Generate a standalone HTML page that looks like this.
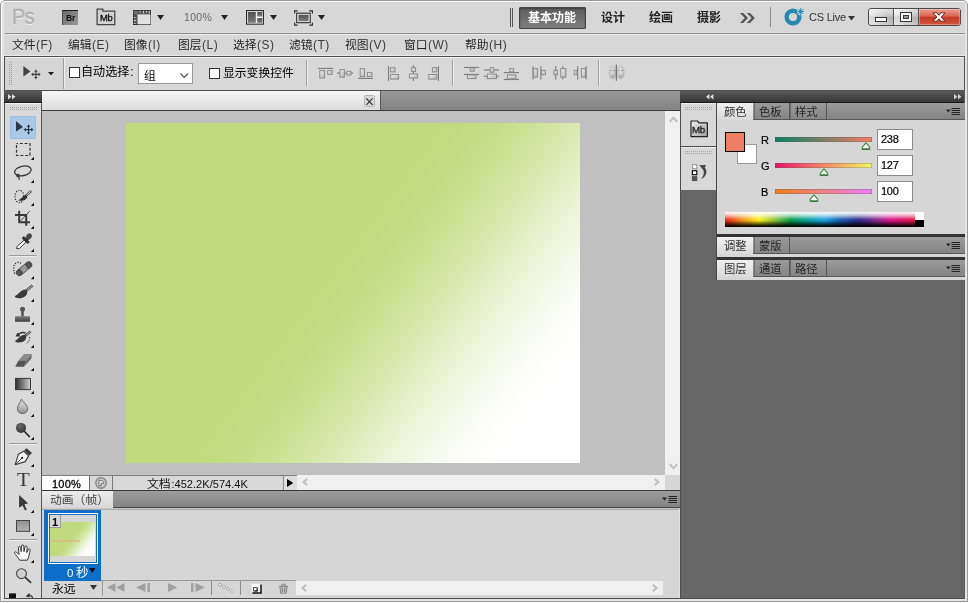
<!DOCTYPE html>
<html lang="zh"><head><meta charset="utf-8"><title>Adobe Photoshop CS5</title>
<style>
html,body{margin:0;padding:0;background:#fff}
#app{position:relative;width:969px;height:603px;overflow:hidden;font-family:"Liberation Sans",sans-serif;font-size:12px;background:#fff}
#app div,#app>svg,#app span.a{position:absolute;box-sizing:border-box}
.t{white-space:nowrap;will-change:transform}
.t span.cj{font-family:"Liberation Sans","Noto Sans CJK SC",sans-serif}
</style></head>
<body><div id="app">
<div style="left:0px;top:0px;width:968px;height:602px;border:1px solid #9a9a9a;border-radius:5px 5px 0 0;background:#e6e6e6;box-shadow:inset 1px 1px 0 #f8f8f8"></div>
<div style="left:4px;top:2px;width:961px;height:55px;background:#d7d7d7"></div>
<div style="left:5px;top:32px;width:960px;height:1px;background:#dedede"></div>
<div style="left:5px;top:33px;width:960px;height:1px;background:#8c8c8c"></div>
<div style="left:5px;top:34px;width:960px;height:1px;background:#ececec"></div>
<div class="t" style="left:12.3px;top:6.98px;line-height:20px;font-size:22px;color:#b0b0b0;text-shadow:0 1px 0 #fff;letter-spacing:-0.5px;transform:scaleX(0.9);transform-origin:0 0;-webkit-text-stroke:0.5px #b0b0b0">Ps</div>
<div style="left:62px;top:10px;width:16px;height:15px;background:linear-gradient(135deg,#6e6e6e,#989898);border-top:1px solid #1c1c1c;border-left:1px solid #4a4a4a"></div>
<div class="t" style="left:65.9px;top:8.02px;line-height:20px;font-size:8.6px;color:#111;font-weight:bold;letter-spacing:-0.2px">Br</div>
<svg style="left:96px;top:8px;" width="20" height="18" viewBox="0 0 20 18"><path d="M1.1 1.1V16.7H18.8V3.1H6.8V1.1Z" fill="#d2d2d2" stroke="#444" stroke-width="1.25" stroke-linejoin="miter"/></svg>
<div class="t" style="left:99.6px;top:7.54px;line-height:20px;font-size:9.4px;color:#111;letter-spacing:-0.3px;-webkit-text-stroke:0.35px #111">Mb</div>
<svg style="left:133px;top:10px;" width="18" height="15" viewBox="0 0 18 15"><rect x="0" y="0" width="18" height="15" fill="#262626"/><rect x="0.8" y="0.8" width="16.4" height="3.8" fill="#555"/><rect x="0.8" y="0.8" width="3.9" height="13.4" fill="#555"/><rect x="0.8" y="0.8" width="3.9" height="3.8" fill="#6c6c6c"/><rect x="4.9" y="4.8" width="12.2" height="9.2" fill="#e0e0e0" stroke="#f6f6f6" stroke-width="0.6"/><rect x="6.6" y="0.8" width="0.9" height="1.6" fill="#e8e8e8"/><rect x="9.9" y="0.8" width="0.9" height="2.6" fill="#e8e8e8"/><rect x="13.2" y="0.8" width="0.9" height="1.6" fill="#e8e8e8"/><rect x="15.9" y="0.8" width="0.9" height="2.6" fill="#e8e8e8"/><rect x="0.8" y="7.2" width="1.6" height="0.9" fill="#e8e8e8"/><rect x="0.8" y="10.2" width="2.4" height="0.9" fill="#e8e8e8"/><rect x="0.8" y="13" width="1.6" height="0.9" fill="#e8e8e8"/></svg>
<svg style="left:157px;top:15px;" width="7" height="5" viewBox="0 0 7 5"><path d="M0 0H7L3.5 5Z" fill="#222"/></svg>
<div class="t" style="left:183.6px;top:7.36px;line-height:20px;font-size:10.5px;color:#686868;letter-spacing:0.286px;">100%</div>
<svg style="left:220.5px;top:15px;" width="7" height="5" viewBox="0 0 7 5"><path d="M0 0H7L3.5 5Z" fill="#222"/></svg>
<svg style="left:246px;top:10px;" width="18" height="15" viewBox="0 0 18 15"><defs><linearGradient id="gPa" x1="0" x2="0" y1="0" y2="1"><stop offset="0" stop-color="#505050"/><stop offset="1" stop-color="#7c7c7c"/></linearGradient></defs><rect x="0.55" y="0.55" width="16.9" height="13.6" fill="#f2f2f2" stroke="#2a2a2a" stroke-width="1.1"/><rect x="1.9" y="1.9" width="7.9" height="10.9" fill="url(#gPa)"/><rect x="11.2" y="1.9" width="5.1" height="4.6" fill="url(#gPa)"/><rect x="11.2" y="8.1" width="5.1" height="4.7" fill="url(#gPa)"/></svg>
<svg style="left:270px;top:15px;" width="7" height="5" viewBox="0 0 7 5"><path d="M0 0H7L3.5 5Z" fill="#222"/></svg>
<svg style="left:293.5px;top:9.5px;" width="19" height="16" viewBox="0 0 19 16"><defs><linearGradient id="gPb" x1="0" x2="0" y1="0" y2="1"><stop offset="0" stop-color="#505050"/><stop offset="1" stop-color="#7c7c7c"/></linearGradient></defs><rect x="2.7" y="3.2" width="13.5" height="9.5" fill="#f4f4f4" stroke="#2a2a2a" stroke-width="1.1"/><rect x="4.5" y="4.7" width="10.1" height="6.6" fill="url(#gPb)"/><path d="M0.6 3.6V0.9H3.6M15.2 0.9H18.4V3.6M18.4 12.4V15.1H15.2M3.6 15.1H0.6V12.4" fill="none" stroke="#2a2a2a" stroke-width="1.1"/></svg>
<svg style="left:318px;top:15px;" width="7" height="5" viewBox="0 0 7 5"><path d="M0 0H7L3.5 5Z" fill="#222"/></svg>
<div style="left:510px;top:7.5px;width:1px;height:19px;background:#555"></div>
<div style="left:512px;top:7.5px;width:1px;height:19px;background:#555"></div>
<div style="left:519px;top:6.5px;width:66.5px;height:22px;background:linear-gradient(#5e5e5e,#7e7e7e);border:1px solid #444;border-radius:1px;box-shadow:inset 0 1px 2px rgba(0,0,0,.35)"></div>
<div class="t" style="left:527.6px;top:8.04px;line-height:20px;font-size:12px;color:#fff;"><span class="cj" style="font-size:12px;color:#fff;font-weight:bold">基本功能</span></div>
<div class="t" style="left:600.6px;top:8.04px;line-height:20px;font-size:12px;color:#000;"><span class="cj" style="font-size:12px;color:#222;font-weight:bold">设计</span></div>
<div class="t" style="left:648.6px;top:8.04px;line-height:20px;font-size:12px;color:#000;"><span class="cj" style="font-size:12px;color:#222;font-weight:bold">绘画</span></div>
<div class="t" style="left:697.1px;top:8.04px;line-height:20px;font-size:12px;color:#000;"><span class="cj" style="font-size:12px;color:#222;font-weight:bold">摄影</span></div>
<svg style="left:740px;top:13px;" width="15" height="10" viewBox="0 0 15 10"><path d="M0 0H3.2L8 5L3.2 10H0L4.8 5Z M6.8 0H10L14.8 5L10 10H6.8L11.6 5Z" fill="#555"/></svg>
<div style="left:769.5px;top:7px;width:1px;height:20px;background:#8a8a8a"></div>
<svg style="left:782.7px;top:7.4px;" width="23" height="19" viewBox="0 0 23 19"><circle cx="10" cy="10" r="6.35" fill="none" stroke="#2589b1" stroke-width="4.5"/><circle cx="17.7" cy="4.6" r="3.7" fill="#d7d7d7"/><path d="M17.7 1.2V8M14.3 4.6H21.1M15.3 2.2L20.1 7M20.1 2.2L15.3 7" stroke="#2589b1" stroke-width="1"/><circle cx="17.7" cy="4.6" r="1.3" fill="#2589b1"/></svg>
<div class="t" style="left:808.6px;top:7.19px;line-height:20px;font-size:11px;color:#333;letter-spacing:-0.217px;">CS Live</div>
<svg style="left:848px;top:16px;" width="7" height="4.5" viewBox="0 0 7 4.5"><path d="M0 0H7L3.5 4.5Z" fill="#333"/></svg>
<div style="left:868px;top:8px;width:93px;height:18px;border:1px solid #4a4a4a;border-radius:3px;background:linear-gradient(#fafafa,#d8d8d8 45%,#c4c4c4 50%,#dcdcdc)"></div>
<div style="left:869px;top:9px;width:24px;height:16px;background:linear-gradient(to right,rgba(255,255,255,.35),rgba(0,0,0,.12));border-radius:2px 0 0 2px"></div>
<div style="left:894px;top:9px;width:24px;height:16px;background:linear-gradient(to right,rgba(255,255,255,.35),rgba(0,0,0,.12))"></div>
<div style="left:893px;top:9px;width:1px;height:16px;background:#555"></div>
<div style="left:918px;top:9px;width:1px;height:16px;background:#555"></div>
<div style="left:919px;top:9px;width:41px;height:16px;border-radius:0 2px 2px 0;background:linear-gradient(#e9a090,#d9634f 45%,#c63a25 50%,#d2543f);box-shadow:inset 0 0 0 1px rgba(255,255,255,.3)"></div>
<svg style="left:875px;top:16.6px;" width="12" height="5" viewBox="0 0 12 5"><rect x="0.5" y="0.5" width="11" height="4" fill="#fff" stroke="#333"/></svg>
<svg style="left:900px;top:12px;" width="12" height="10" viewBox="0 0 12 10"><rect x="0.5" y="0.5" width="11" height="9" fill="#fff" stroke="#333"/><rect x="3.5" y="3.5" width="5" height="3" fill="#999" stroke="#333"/></svg>
<svg style="left:932px;top:12px;" width="14" height="10" viewBox="0 0 14 10"><path d="M1 0.8H5L7 3.3L9 0.8H13L9.2 5L13 9.2H9L7 6.7L5 9.2H1L4.8 5Z" fill="#fff" stroke="#5a2018" stroke-width="0.9"/></svg>
<div class="t" style="left:12.4px;top:34.64px;line-height:20px;font-size:12px;color:#262626;"><span class="cj" style="font-size:11.8px;color:#262626">文件</span><span style="letter-spacing:0.45px;margin-left:0.5px;color:#3c3c3c">(F)</span></div>
<div class="t" style="left:68.4px;top:34.64px;line-height:20px;font-size:12px;color:#262626;"><span class="cj" style="font-size:11.8px;color:#262626">编辑</span><span style="letter-spacing:0.45px;margin-left:0.5px;color:#3c3c3c">(E)</span></div>
<div class="t" style="left:124.4px;top:34.64px;line-height:20px;font-size:12px;color:#262626;"><span class="cj" style="font-size:11.8px;color:#262626">图像</span><span style="letter-spacing:0.45px;margin-left:0.5px;color:#3c3c3c">(I)</span></div>
<div class="t" style="left:177.9px;top:34.64px;line-height:20px;font-size:12px;color:#262626;"><span class="cj" style="font-size:11.8px;color:#262626">图层</span><span style="letter-spacing:0.45px;margin-left:0.5px;color:#3c3c3c">(L)</span></div>
<div class="t" style="left:233.4px;top:34.64px;line-height:20px;font-size:12px;color:#262626;"><span class="cj" style="font-size:11.8px;color:#262626">选择</span><span style="letter-spacing:0.45px;margin-left:0.5px;color:#3c3c3c">(S)</span></div>
<div class="t" style="left:289.4px;top:34.64px;line-height:20px;font-size:12px;color:#262626;"><span class="cj" style="font-size:11.8px;color:#262626">滤镜</span><span style="letter-spacing:0.45px;margin-left:0.5px;color:#3c3c3c">(T)</span></div>
<div class="t" style="left:345.4px;top:34.64px;line-height:20px;font-size:12px;color:#262626;"><span class="cj" style="font-size:11.8px;color:#262626">视图</span><span style="letter-spacing:0.45px;margin-left:0.5px;color:#3c3c3c">(V)</span></div>
<div class="t" style="left:403.9px;top:34.64px;line-height:20px;font-size:12px;color:#262626;"><span class="cj" style="font-size:11.8px;color:#262626">窗口</span><span style="letter-spacing:0.45px;margin-left:0.5px;color:#3c3c3c">(W)</span></div>
<div class="t" style="left:464.9px;top:34.64px;line-height:20px;font-size:12px;color:#262626;"><span class="cj" style="font-size:11.8px;color:#262626">帮助</span><span style="letter-spacing:0.45px;margin-left:0.5px;color:#3c3c3c">(H)</span></div>
<div style="left:4px;top:55px;width:961px;height:1px;background:#eaeaea"></div>
<div style="left:4px;top:56px;width:961px;height:35px;background:#d8d8d8;border:1px solid #505050;box-shadow:inset 0 1px 0 #f0f0f0"></div>
<div style="left:5px;top:58px;width:58px;height:32px;background:#d5d5d5"></div>
<svg style="left:9px;top:62px;" width="4" height="24" viewBox="0 0 4 24"><rect x="0" y="0" width="1" height="1" fill="#9a9a9a"/><rect x="0" y="2" width="1" height="1" fill="#9a9a9a"/><rect x="0" y="4" width="1" height="1" fill="#9a9a9a"/><rect x="0" y="6" width="1" height="1" fill="#9a9a9a"/><rect x="0" y="8" width="1" height="1" fill="#9a9a9a"/><rect x="0" y="10" width="1" height="1" fill="#9a9a9a"/><rect x="0" y="12" width="1" height="1" fill="#9a9a9a"/><rect x="0" y="14" width="1" height="1" fill="#9a9a9a"/><rect x="0" y="16" width="1" height="1" fill="#9a9a9a"/><rect x="0" y="18" width="1" height="1" fill="#9a9a9a"/><rect x="0" y="20" width="1" height="1" fill="#9a9a9a"/><rect x="0" y="22" width="1" height="1" fill="#9a9a9a"/><rect x="2" y="0" width="1" height="1" fill="#9a9a9a"/><rect x="2" y="2" width="1" height="1" fill="#9a9a9a"/><rect x="2" y="4" width="1" height="1" fill="#9a9a9a"/><rect x="2" y="6" width="1" height="1" fill="#9a9a9a"/><rect x="2" y="8" width="1" height="1" fill="#9a9a9a"/><rect x="2" y="10" width="1" height="1" fill="#9a9a9a"/><rect x="2" y="12" width="1" height="1" fill="#9a9a9a"/><rect x="2" y="14" width="1" height="1" fill="#9a9a9a"/><rect x="2" y="16" width="1" height="1" fill="#9a9a9a"/><rect x="2" y="18" width="1" height="1" fill="#9a9a9a"/><rect x="2" y="20" width="1" height="1" fill="#9a9a9a"/><rect x="2" y="22" width="1" height="1" fill="#9a9a9a"/></svg>
<svg style="left:22.5px;top:65.9px;" width="19" height="15" viewBox="0 0 19 15"><path d="M0.4 0V10.4L7.4 5.6Z" fill="#424242"/><path d="M12.9 4.6V12.2M9.1 8.4H16.7" stroke="#424242" stroke-width="1.1" fill="none"/><path d="M12.9 3.6L11.1 5.8H14.7ZM12.9 13.2L11.1 11H14.7ZM8.1 8.4L10.3 6.6V10.2ZM17.7 8.4L15.5 6.6V10.2Z" fill="#424242"/></svg>
<svg style="left:47.5px;top:71.5px;" width="6" height="3.5" viewBox="0 0 6 3.5"><path d="M0 0H6L3 3.5Z" fill="#222"/></svg>
<div style="left:63px;top:58px;width:1px;height:31px;background:#9c9c9c"></div>
<div style="left:64px;top:58px;width:1px;height:31px;background:#eee"></div>
<div style="left:69px;top:67px;width:11px;height:11px;background:#fff;border:1px solid #333"></div>
<div class="t" style="left:81.3px;top:62.24px;line-height:20px;font-size:12px;color:#000;"><span class="cj" style="font-size:12.1px;color:#000">自动选择</span><span style="margin-left:0.8px">:</span></div>
<div style="left:138px;top:63px;width:54.5px;height:21px;background:#fff;border:1px solid #9a9a9a"></div>
<div class="t" style="left:143.6px;top:65.84px;line-height:20px;font-size:12px;color:#000;"><span class="cj" style="font-size:11.8px;color:#000">组</span></div>
<svg style="left:180px;top:72.5px;" width="8.5" height="5.5" viewBox="0 0 8.5 5.5"><path d="M0.5 0.5L4.25 4.5L8 0.5" fill="none" stroke="#555" stroke-width="1.2"/></svg>
<div style="left:209px;top:68px;width:11px;height:11px;background:#fff;border:1px solid #333"></div>
<div class="t" style="left:222.5px;top:62.84px;line-height:20px;font-size:12px;color:#000;"><span class="cj" style="font-size:11.8px;color:#000">显示变换控件</span></div>
<div style="left:306px;top:60px;width:1px;height:26px;background:#a0a0a0"></div>
<div style="left:307px;top:60px;width:1px;height:26px;background:#ececec"></div>
<div style="left:451.5px;top:60px;width:1px;height:26px;background:#a0a0a0"></div>
<div style="left:452.5px;top:60px;width:1px;height:26px;background:#ececec"></div>
<div style="left:597.5px;top:60px;width:1px;height:26px;background:#a0a0a0"></div>
<div style="left:598.5px;top:60px;width:1px;height:26px;background:#ececec"></div>
<svg style="left:0;top:0" width="640" height="92" viewBox="0 0 640 92"><defs><linearGradient id="gB" x1="0" x2="1" y1="0" y2="1"><stop offset="0" stop-color="#f2f2f2"/><stop offset="1" stop-color="#b2b2b2"/></linearGradient></defs><path d="M318 68.4H333.2" stroke="#7a7a7a" stroke-width="1.1"/><rect x="319.8" y="70.6" width="4.8" height="7.4" fill="url(#gB)" stroke="#8a8a8a" stroke-width="1"/><rect x="327.7" y="70.6" width="4.4" height="3.8" fill="url(#gB)" stroke="#8a8a8a" stroke-width="1"/><path d="M337 73H353" stroke="#7a7a7a" stroke-width="1.1"/><rect x="340" y="69.6" width="4.4" height="7.6" fill="url(#gB)" stroke="#8a8a8a" stroke-width="1"/><rect x="346.8" y="71.3" width="4.1" height="3.7" fill="url(#gB)" stroke="#8a8a8a" stroke-width="1"/><path d="M358 78.4H373.2" stroke="#7a7a7a" stroke-width="1.1"/><rect x="360.2" y="68.7" width="4.4" height="7.9" fill="url(#gB)" stroke="#8a8a8a" stroke-width="1"/><rect x="367.4" y="72.6" width="4.6" height="4" fill="url(#gB)" stroke="#8a8a8a" stroke-width="1"/><path d="M388.5 66.2V81" stroke="#7a7a7a" stroke-width="1.1"/><rect x="390.6" y="67.7" width="4.4" height="4.2" fill="url(#gB)" stroke="#8a8a8a" stroke-width="1"/><rect x="390.6" y="74.5" width="8" height="4.6" fill="url(#gB)" stroke="#8a8a8a" stroke-width="1"/><path d="M413.4 65.2V81" stroke="#7a7a7a" stroke-width="1.1"/><rect x="411.4" y="67.7" width="4.2" height="3.7" fill="url(#gB)" stroke="#8a8a8a" stroke-width="1"/><rect x="409.4" y="73.9" width="8.2" height="4.1" fill="url(#gB)" stroke="#8a8a8a" stroke-width="1"/><path d="M438.4 66.2V81" stroke="#7a7a7a" stroke-width="1.1"/><rect x="432.4" y="67.7" width="4.4" height="4.2" fill="url(#gB)" stroke="#8a8a8a" stroke-width="1"/><rect x="428.8" y="74.5" width="8" height="4.6" fill="url(#gB)" stroke="#8a8a8a" stroke-width="1"/><path d="M464 67.4H479.2" stroke="#7a7a7a" stroke-width="1.1"/><path d="M464 74.4H479.2" stroke="#7a7a7a" stroke-width="1.1"/><rect x="470.2" y="68" width="4" height="3.2" fill="url(#gB)" stroke="#8a8a8a" stroke-width="1"/><rect x="467.4" y="75" width="8.7" height="3.6" fill="url(#gB)" stroke="#8a8a8a" stroke-width="1"/><path d="M483.8 70H499" stroke="#7a7a7a" stroke-width="1.1"/><path d="M483.8 76.3H499" stroke="#7a7a7a" stroke-width="1.1"/><rect x="490.2" y="67.7" width="3.6" height="4.5" fill="url(#gB)" stroke="#8a8a8a" stroke-width="1"/><rect x="487.4" y="74.1" width="9.1" height="4.5" fill="url(#gB)" stroke="#8a8a8a" stroke-width="1"/><path d="M503.7 72.6H519" stroke="#7a7a7a" stroke-width="1.1"/><path d="M503.7 79.5H519" stroke="#7a7a7a" stroke-width="1.1"/><rect x="509.7" y="68.6" width="4" height="3.4" fill="url(#gB)" stroke="#8a8a8a" stroke-width="1"/><rect x="507.4" y="75" width="8.6" height="3.9" fill="url(#gB)" stroke="#8a8a8a" stroke-width="1"/><path d="M533 66.3V79.6" stroke="#7a7a7a" stroke-width="1.1"/><path d="M540.9 66.3V79.6" stroke="#7a7a7a" stroke-width="1.1"/><rect x="533.7" y="68.6" width="3.7" height="8.6" fill="url(#gB)" stroke="#8a8a8a" stroke-width="1"/><rect x="541.6" y="70.4" width="3.8" height="4.3" fill="url(#gB)" stroke="#8a8a8a" stroke-width="1"/><path d="M555.7 66.3V79.6" stroke="#7a7a7a" stroke-width="1.1"/><path d="M562.8 66.3V79.6" stroke="#7a7a7a" stroke-width="1.1"/><rect x="553.9" y="70.4" width="3.4" height="4.3" fill="url(#gB)" stroke="#8a8a8a" stroke-width="1"/><rect x="560.8" y="68.6" width="5" height="8.6" fill="url(#gB)" stroke="#8a8a8a" stroke-width="1"/><path d="M577.7 66.3V79.6" stroke="#7a7a7a" stroke-width="1.1"/><path d="M586.1 66.3V79.6" stroke="#7a7a7a" stroke-width="1.1"/><rect x="574.2" y="70.4" width="2.9" height="4.3" fill="url(#gB)" stroke="#8a8a8a" stroke-width="1"/><rect x="581.4" y="68.6" width="4.1" height="8.6" fill="url(#gB)" stroke="#8a8a8a" stroke-width="1"/><defs><radialGradient id="gF" cx="0.45" cy="0.4" r="0.7"><stop offset="0" stop-color="#e6e6e6"/><stop offset="1" stop-color="#a8a8a8"/></radialGradient></defs><ellipse cx="612.4" cy="72.2" rx="3.7" ry="7" fill="url(#gF)"/><ellipse cx="620.6" cy="72.2" rx="4" ry="7" fill="url(#gF)"/><path d="M616.3 64.6V80.8" stroke="#5a5a5a" stroke-width="1"/><g fill="#8a8a8a"><ellipse cx="611.3" cy="70.6" rx="1" ry="0.6"/><ellipse cx="614" cy="70.6" rx="0.8" ry="0.6"/><ellipse cx="619" cy="70.6" rx="0.9" ry="0.6"/><ellipse cx="622.2" cy="70.6" rx="1" ry="0.6"/><rect x="611.6" y="75.6" width="2.2" height="0.8"/><rect x="619.4" y="75.6" width="2.4" height="0.8"/></g></svg>
<div style="left:4px;top:91px;width:38px;height:12px;background:linear-gradient(#5a5a5a,#363636);border-bottom:1px solid #1a1a1a"></div>
<svg style="left:8px;top:94px;" width="8" height="5.5" viewBox="0 0 8 5.5"><path d="M0 0L3.4 2.75L0 5.5ZM4 0L7.4 2.75L4 5.5Z" fill="#e0e0e0"/></svg>
<div style="left:4px;top:103px;width:38px;height:496px;background:#d9d9d9;border-left:1px solid #555;border-right:1px solid #555;box-shadow:inset 0 1px 0 #f4f4f4"></div>
<svg style="left:10px;top:107px;" width="28" height="4" viewBox="0 0 28 4"><rect x="0" y="0" width="1" height="1" fill="#9c9c9c"/><rect x="0" y="2" width="1" height="1" fill="#9c9c9c"/><rect x="2" y="0" width="1" height="1" fill="#9c9c9c"/><rect x="2" y="2" width="1" height="1" fill="#9c9c9c"/><rect x="4" y="0" width="1" height="1" fill="#9c9c9c"/><rect x="4" y="2" width="1" height="1" fill="#9c9c9c"/><rect x="6" y="0" width="1" height="1" fill="#9c9c9c"/><rect x="6" y="2" width="1" height="1" fill="#9c9c9c"/><rect x="8" y="0" width="1" height="1" fill="#9c9c9c"/><rect x="8" y="2" width="1" height="1" fill="#9c9c9c"/><rect x="10" y="0" width="1" height="1" fill="#9c9c9c"/><rect x="10" y="2" width="1" height="1" fill="#9c9c9c"/><rect x="12" y="0" width="1" height="1" fill="#9c9c9c"/><rect x="12" y="2" width="1" height="1" fill="#9c9c9c"/><rect x="14" y="0" width="1" height="1" fill="#9c9c9c"/><rect x="14" y="2" width="1" height="1" fill="#9c9c9c"/><rect x="16" y="0" width="1" height="1" fill="#9c9c9c"/><rect x="16" y="2" width="1" height="1" fill="#9c9c9c"/><rect x="18" y="0" width="1" height="1" fill="#9c9c9c"/><rect x="18" y="2" width="1" height="1" fill="#9c9c9c"/><rect x="20" y="0" width="1" height="1" fill="#9c9c9c"/><rect x="20" y="2" width="1" height="1" fill="#9c9c9c"/><rect x="22" y="0" width="1" height="1" fill="#9c9c9c"/><rect x="22" y="2" width="1" height="1" fill="#9c9c9c"/><rect x="24" y="0" width="1" height="1" fill="#9c9c9c"/><rect x="24" y="2" width="1" height="1" fill="#9c9c9c"/><rect x="26" y="0" width="1" height="1" fill="#9c9c9c"/><rect x="26" y="2" width="1" height="1" fill="#9c9c9c"/></svg>
<div style="left:10px;top:116px;width:26px;height:23px;background:#a9c9e6;border:1px solid #9dbfdf"></div>
<div style="left:9px;top:255px;width:28px;height:1px;background:#9c9c9c"></div>
<div style="left:9px;top:256px;width:28px;height:1px;background:#eee"></div>
<div style="left:9px;top:443px;width:28px;height:1px;background:#9c9c9c"></div>
<div style="left:9px;top:444px;width:28px;height:1px;background:#eee"></div>
<div style="left:9px;top:539px;width:28px;height:1px;background:#9c9c9c"></div>
<div style="left:9px;top:540px;width:28px;height:1px;background:#eee"></div>
<svg style="left:0;top:0" width="46" height="603" viewBox="0 0 46 603"><defs><linearGradient id="gGrad" x1="0" x2="1" y1="0" y2="0"><stop offset="0" stop-color="#2e2e2e"/><stop offset="1" stop-color="#d0d0d0"/></linearGradient><linearGradient id="gRect" x1="0" x2="0" y1="0" y2="1"><stop offset="0" stop-color="#8f8f8f"/><stop offset="1" stop-color="#b4b4b4"/></linearGradient><linearGradient id="gDrop" x1="0" x2="0" y1="0" y2="1"><stop offset="0" stop-color="#dadada"/><stop offset="0.45" stop-color="#c6c6c6"/><stop offset="1" stop-color="#8c8c8c"/></linearGradient><radialGradient id="gDodge" cx="0.4" cy="0.35" r="0.7"><stop offset="0" stop-color="#6a6a6a"/><stop offset="1" stop-color="#333"/></radialGradient><linearGradient id="gStamp" x1="0" x2="0" y1="0" y2="1"><stop offset="0" stop-color="#7a7a7a"/><stop offset="0.6" stop-color="#5a5a5a"/><stop offset="1" stop-color="#3a3a3a"/></linearGradient></defs><path d="M30.8 160 L34 156.8 V160 Z" fill="#111"/><path d="M30.8 183 L34 179.8 V183 Z" fill="#111"/><path d="M30.8 206 L34 202.8 V206 Z" fill="#111"/><path d="M30.8 229 L34 225.8 V229 Z" fill="#111"/><path d="M30.8 252 L34 248.8 V252 Z" fill="#111"/><path d="M30.8 279.2 L34 276 V279.2 Z" fill="#111"/><path d="M30.8 302 L34 298.8 V302 Z" fill="#111"/><path d="M30.8 325 L34 321.8 V325 Z" fill="#111"/><path d="M30.8 348 L34 344.8 V348 Z" fill="#111"/><path d="M30.8 371 L34 367.8 V371 Z" fill="#111"/><path d="M30.8 394 L34 390.8 V394 Z" fill="#111"/><path d="M30.8 417 L34 413.8 V417 Z" fill="#111"/><path d="M30.8 440 L34 436.8 V440 Z" fill="#111"/><path d="M30.8 467 L34 463.8 V467 Z" fill="#111"/><path d="M30.8 490 L34 486.8 V490 Z" fill="#111"/><path d="M30.8 513 L34 509.8 V513 Z" fill="#111"/><path d="M30.8 536 L34 532.8 V536 Z" fill="#111"/><path d="M30.8 563 L34 559.8 V563 Z" fill="#111"/><path d="M16 121V131.4L23 126.9Z" fill="#2c3848"/><path d="M28.5 125.6V133.6M24.6 129.6H32.6" stroke="#2c3848" stroke-width="1.1" fill="none"/><path d="M28.5 124.6L26.7 126.8H30.3ZM28.5 134.6L26.7 132.4H30.3ZM23.7 129.6L25.9 127.8V131.4ZM33.4 129.6L31.2 127.8V131.4Z" fill="#2c3848"/><rect x="16.5" y="143.5" width="13.5" height="12" fill="none" stroke="#303030" stroke-width="1.2" stroke-dasharray="3 1.8" stroke-dashoffset="1.5"/><ellipse cx="22.9" cy="170.9" rx="8.4" ry="4.7" transform="rotate(-12 22.9 170.9)" fill="none" stroke="#3a3a3a" stroke-width="1.3"/><path d="M16.2 175C17.5 173.8 19.6 174.6 19.4 176C19.2 177.2 17 177 16.8 176C19 176.4 20 178 18.8 180" fill="none" stroke="#3a3a3a" stroke-width="1.2"/><ellipse cx="19.4" cy="196.5" rx="4.4" ry="6.2" fill="none" stroke="#222" stroke-width="1.3" stroke-dasharray="1.1 1.5"/><path d="M25.8 195.8L31.3 190.8" stroke="#444" stroke-width="2.4"/><path d="M26.2 195.5L31 191.1" stroke="#eee" stroke-width="1"/><path d="M17.8 200.2C20.5 199.8 22 196.2 25.6 194.9C27.2 195.4 27.6 196.6 27.2 197.6C25.5 200.8 21 201.6 17.8 200.2Z" fill="#333"/><path d="M19.2 210.8V222.3H30M15 215H26.2V225.7" fill="none" stroke="#383838" stroke-width="2"/><path d="M20.3 221.2L29.8 211" stroke="#383838" stroke-width="0.9"/><path d="M16.6 248.6L17 246.6L24 240.2L26 242.2L19.2 248.6Z" fill="#fff" stroke="#333" stroke-width="1"/><path d="M22.8 237.2L28.8 243" stroke="#333" stroke-width="3"/><path d="M26 240L29 237" stroke="#333" stroke-width="3.4"/><ellipse cx="29" cy="236.4" rx="2.6" ry="3.1" transform="rotate(45 29 236.4)" fill="#4a4a4a"/><path d="M14.6 273.8C12.5 268 14 262.8 17.8 262.4C19.6 262.2 20.6 263 21.3 263.8" fill="none" stroke="#222" stroke-width="1.3" stroke-dasharray="1.1 1.5"/><path d="M19.4 272.6L28.7 264.9" stroke="#4c4c4c" stroke-width="7" stroke-linecap="round"/><path d="M21.5 270.9L26.6 266.7" stroke="#8e8e8e" stroke-width="5.8"/><g fill="#ddd"><circle cx="23" cy="268" r="0.5"/><circle cx="24.6" cy="269.6" r="0.5"/><circle cx="25" cy="266.6" r="0.5"/><circle cx="23.2" cy="270.8" r="0.5"/><circle cx="19" cy="272" r="0.4"/><circle cx="28.6" cy="264.6" r="0.4"/><circle cx="29.6" cy="266" r="0.4"/><circle cx="18.2" cy="274" r="0.4"/></g><g transform="translate(14.8 285) scale(1)"><path d="M11.6 5.4L17.6 0.4" stroke="#444" stroke-width="2.6"/><path d="M12 5.2L17.4 0.7" stroke="#ddd" stroke-width="0.9"/><path d="M0 11C3.4 10 5 5.2 10.2 4.4C12 4.6 12.8 6.2 12.4 8.2C11 12.8 5 14.2 0.8 12.5C0.2 12.2 0 11.6 0 11Z" fill="#3a3a3a"/></g><circle cx="22.5" cy="309.3" r="2.5" fill="#555"/><rect x="21.2" y="310.5" width="2.6" height="6" fill="#555"/><rect x="15" y="316.2" width="15" height="5.6" rx="0.6" fill="url(#gStamp)"/><g transform="translate(15.2 331) scale(0.88)"><path d="M11.6 5.4L17.6 0.4" stroke="#444" stroke-width="2.6"/><path d="M12 5.2L17.4 0.7" stroke="#ddd" stroke-width="0.9"/><path d="M0 11C3.4 10 5 5.2 10.2 4.4C12 4.6 12.8 6.2 12.4 8.2C11 12.8 5 14.2 0.8 12.5C0.2 12.2 0 11.6 0 11Z" fill="#3a3a3a"/></g><path d="M25.6 333.2C23 331.8 19.5 332.6 18 335" fill="none" stroke="#333" stroke-width="1.5"/><path d="M15.6 336.6L20.6 336.4L17.4 332.6Z" fill="#333"/><path d="M29.6 337.2C30 339.6 28.8 342 26.4 343.4" fill="none" stroke="#222" stroke-width="1.1" stroke-dasharray="1 1.4"/><path d="M18.5 360.6L24 354H31.8L26.5 360.6Z" fill="#8c8c8c"/><path d="M18.5 360.6H26.5L24 366.8H15.2Z" fill="#555"/><path d="M26.5 360.6L31.8 354L31.4 358.6L24 366.8Z" fill="#6a6a6a"/><rect x="15.5" y="378.4" width="15" height="11.2" fill="url(#gGrad)" stroke="#3a3a3a" stroke-width="1"/><path d="M21.4 399.2C20.6 402.6 17.4 405.2 17.4 408.8C17.4 411.6 19.6 413.6 22.5 413.6C25.4 413.6 27.6 411.6 27.6 408.8C27.6 405.2 23.4 402.6 21.4 399.2Z" fill="url(#gDrop)" stroke="#5a5a5a" stroke-width="0.9"/><path d="M24 431L29.8 437" stroke="#222" stroke-width="1.6"/><circle cx="21" cy="427.9" r="5" fill="url(#gDodge)"/><path d="M15.2 464.7L18.4 454.2L23.6 451.2L28.6 455.9L25.2 461.6Z" fill="#f4f4f4" stroke="#3a3a3a" stroke-width="1.1" stroke-linejoin="round"/><path d="M15.2 464.7L22 458" stroke="#3a3a3a" stroke-width="0.9"/><circle cx="22.1" cy="457.9" r="1.1" fill="#222"/><path d="M24 450.6L26.6 448.2L32 453.1L29.3 455.6Z" fill="#3a3a3a"/><text x="16.9" y="486" font-family="Liberation Serif, serif" font-size="19.4" fill="#3a3a3a" textLength="12.8" lengthAdjust="spacingAndGlyphs">T</text><path d="M19.1 495.1V507.8L22.6 505.6L25 510.4L26.8 509.5L24.4 504.6L28 503.3Z" fill="#3a3a3a"/><rect x="16.5" y="520.5" width="13" height="10.8" fill="url(#gRect)" stroke="#444" stroke-width="1"/><path d="M19.6 560.2C18 557.4 16 555 14.6 553.4C14 552.4 15.4 551.2 16.6 552.2L19 554.6L18.4 547.6C18.4 546 20.4 546 20.6 547.4L21.2 551.6L21.4 546C21.6 544.4 23.6 544.4 23.8 546L24 551.6L25 546.8C25.4 545.4 27.2 545.8 27.2 547.2L26.8 552.6L28.2 549.6C28.8 548.4 30.6 549 30.2 550.4C29.4 553.4 29 557 27.4 560.2Z" fill="#fafafa" stroke="#333" stroke-width="1" stroke-linejoin="round"/><path d="M25.2 577.4L30.6 582.4" stroke="#333" stroke-width="1.8" stroke-linecap="round"/><circle cx="21.5" cy="573.7" r="4.9" fill="#d0d0d0" stroke="#444" stroke-width="1.1"/><rect x="9" y="593.4" width="7" height="5" fill="#111"/><rect x="16.4" y="596.6" width="1.4" height="1.4" fill="#fff"/><path d="M27 596.4C27.5 594.6 31.2 594.2 32.8 598" fill="none" stroke="#333" stroke-width="1.2"/><path d="M25.6 596.2L29.6 593V597.4Z" fill="#333"/></svg>
<div style="left:42px;top:91px;width:338px;height:20px;background:linear-gradient(#f6f6f6,#dadada)"></div>
<div style="left:380px;top:91px;width:300px;height:20px;background:linear-gradient(#989898,#828282)"></div>
<div style="left:42px;top:110px;width:638px;height:1px;background:#3c3c3c"></div>
<div style="left:42px;top:111px;width:623px;height:364px;background:#c0c0c0"></div>
<div style="left:126px;top:122.5px;width:454px;height:340.5px;background:linear-gradient(127deg,#bfdb7d 0%,#bfdb7d 45.0%,#c2dd83 50.4%,#c9e191 55.8%,#d3e6a6 61.1%,#dfedbe 66.5%,#ebf4d6 71.9%,#f5f9eb 77.2%,#fcfdf9 82.6%,#ffffff 88.0%)"></div>
<div style="left:364px;top:95px;width:11px;height:12px;border:1px solid #b4b4b4;background:#dadada;border-radius:1.5px"></div>
<svg style="left:366px;top:97.5px;" width="7" height="7.4" viewBox="0 0 7 7.4"><path d="M0.3 0.4L6.6 7M6.6 0.4L0.3 7" stroke="#333" stroke-width="1.15"/></svg>
<div style="left:380px;top:91px;width:1px;height:19px;background:#5a5a5a"></div>
<div style="left:665px;top:111px;width:15px;height:364px;background:#f0f0f0"></div>
<svg style="left:668.5px;top:116.4px;" width="9" height="7" viewBox="0 0 9 7"><path d="M0.8 5.8L4.5 1.7L8.2 5.8" fill="none" stroke="#bdbdbd" stroke-width="2"/></svg>
<svg style="left:668.5px;top:463.4px;" width="9" height="7" viewBox="0 0 9 7"><path d="M0.8 1.2L4.5 5.3L8.2 1.2" fill="none" stroke="#bdbdbd" stroke-width="2"/></svg>
<div style="left:42px;top:475px;width:638px;height:15px;background:#f0f0f0"></div>
<div style="left:42px;top:475px;width:255px;height:1px;background:#808080"></div>
<div style="left:665px;top:475px;width:15px;height:15px;background:#d6d6d6"></div>
<div style="left:42px;top:476px;width:47px;height:14px;background:#fff"></div>
<div style="left:89px;top:476px;width:1px;height:14px;background:#6a6a6a"></div>
<div style="left:90px;top:476px;width:22px;height:14px;background:#d8d8d8"></div>
<div style="left:112px;top:476px;width:1px;height:14px;background:#7a7a7a"></div>
<div style="left:113px;top:476px;width:170px;height:14px;background:#d8d8d8"></div>
<div style="left:283px;top:476px;width:1px;height:14px;background:#888"></div>
<div style="left:284px;top:476px;width:13px;height:14px;background:#dedede"></div>
<div class="t" style="left:51.6px;top:474.19px;line-height:20px;font-size:11px;color:#000;letter-spacing:0.217px;-webkit-text-stroke:0.3px #000">100%</div>
<svg style="left:95px;top:476.9px;" width="12" height="12" viewBox="0 0 12 12"><circle cx="6" cy="6" r="5.2" fill="#cdcdcd" stroke="#858585" stroke-width="1.4"/><path d="M3.9 3.4H6.6C8.2 3.6 8.9 5 8.8 6.4L6.2 6.2V8.8H3.9Z" fill="#e2e2e2" stroke="#686868" stroke-width="0.9"/></svg>
<div class="t" style="left:147px;top:473.79px;line-height:20px;font-size:11px;color:#111;"><span class="cj" style="font-size:11.8px;color:#111">文档</span><span style="margin-left:0.8px;letter-spacing:0.047px;">:452.2K/574.4K</span></div>
<svg style="left:286.5px;top:479px;" width="6.5" height="8" viewBox="0 0 6.5 8"><path d="M0 0L6.5 4L0 8Z" fill="#000"/></svg>
<svg style="left:302px;top:478.3px;" width="6" height="8" viewBox="0 0 6 8"><path d="M5.2 0.9L1.5 4L5.2 7.1" fill="none" stroke="#bdbdbd" stroke-width="2"/></svg>
<svg style="left:654px;top:478.3px;" width="6" height="8" viewBox="0 0 6 8"><path d="M0.8 0.9L4.5 4L0.8 7.1" fill="none" stroke="#bdbdbd" stroke-width="2"/></svg>
<div style="left:42px;top:490px;width:638px;height:1px;background:#3a3a3a"></div>
<div style="left:42px;top:491px;width:638px;height:17px;background:linear-gradient(#9c9c9c,#848484);border-bottom:1px solid #4a4a4a"></div>
<div style="left:42px;top:491px;width:71px;height:18px;background:linear-gradient(#ececec,#d6d6d6)"></div>
<div style="left:42px;top:508px;width:638px;height:2px;background:#c9c9c9;border-bottom:1px solid #aaa"></div>
<div style="left:113px;top:508px;width:567px;height:1px;background:#c4c4c4"></div>
<div style="left:42px;top:510px;width:638px;height:88px;background:#d6d6d6"></div>
<div style="left:679px;top:509px;width:1px;height:89px;background:#e4e4e4"></div>
<div class="t" style="left:49.5px;top:490.44px;line-height:20px;font-size:12px;color:#000;"><span class="cj" style="font-size:11.8px;color:#444">动画（帧）</span></div>
<svg style="left:661.5px;top:496px;" width="15" height="8" viewBox="0 0 15 8"><path d="M0 1.5H5L2.5 4.5Z" fill="#222"/><path d="M6.5 0.5H15M6.5 2.5H15M6.5 4.5H15M6.5 6.5H15" stroke="#222" stroke-width="1"/></svg>
<div style="left:44px;top:510px;width:57px;height:71px;background:#0d6fc9"></div>
<div style="left:47.5px;top:513px;width:50px;height:51px;border:1px solid #fff;background:#0d6fc9"></div>
<div style="left:49.5px;top:515px;width:46px;height:47px;background:#d6d6d6"></div>
<div style="left:50px;top:521.5px;width:45px;height:34px;background:linear-gradient(127deg,#bfdb7d 0%,#bfdb7d 45.0%,#c2dd83 50.4%,#c9e191 55.8%,#d3e6a6 61.1%,#dfedbe 66.5%,#ebf4d6 71.9%,#f5f9eb 77.2%,#fcfdf9 82.6%,#ffffff 88.0%)"></div>
<div style="left:52px;top:540px;width:27.6px;height:2px;background:repeating-linear-gradient(to right,#e9a98a 0,#e9a98a 2px,rgba(233,169,138,.35) 2px,rgba(233,169,138,.35) 3px);opacity:.7"></div>
<div style="left:49.5px;top:515px;width:11px;height:12.5px;background:#d8d8d8;border-right:1px solid #999;border-bottom:1px solid #999"></div>
<div class="t" style="left:51.8px;top:511.79px;line-height:20px;font-size:11px;color:#000;font-weight:bold">1</div>
<div class="t" style="left:67.3px;top:563.02px;line-height:20px;font-size:11.5px;color:#fff;">0</div>
<div class="t" style="left:76.3px;top:563.02px;line-height:20px;font-size:11.5px;color:#fff;"><span class="cj" style="font-size:12.5px;color:#fff">秒</span></div>
<svg style="left:89.3px;top:568px;" width="6.5" height="5" viewBox="0 0 6.5 5"><path d="M0 0H6.5L3.25 5Z" fill="#0a0a20"/></svg>
<div style="left:101px;top:580px;width:195px;height:1px;background:#9a9a9a"></div>
<div style="left:101.5px;top:581px;width:1px;height:15px;background:#9a9a9a"></div>
<div class="t" style="left:52px;top:578.84px;line-height:20px;font-size:12px;color:#000;"><span class="cj" style="font-size:11.8px;color:#000">永远</span></div>
<svg style="left:90px;top:585px;" width="7" height="5" viewBox="0 0 7 5"><path d="M0 0H7L3.5 5Z" fill="#333"/></svg>
<svg style="left:107px;top:583px;" width="18" height="9" viewBox="0 0 18 9"><path d="M8.5 0V9L0 4.5ZM17.5 0V9L9 4.5Z" fill="#a0a0a0"/></svg>
<svg style="left:136px;top:583px;" width="15" height="9" viewBox="0 0 15 9"><path d="M9.5 0V9L0 4.5Z" fill="#a0a0a0"/><rect x="11.5" y="0" width="2.5" height="9" fill="#a0a0a0"/></svg>
<svg style="left:168px;top:583px;" width="10" height="9" viewBox="0 0 10 9"><path d="M0 0V9L9.5 4.5Z" fill="#a0a0a0"/></svg>
<svg style="left:190.5px;top:583px;" width="15" height="9" viewBox="0 0 15 9"><rect x="0" y="0" width="2.5" height="9" fill="#a0a0a0"/><path d="M4.5 0V9L14 4.5Z" fill="#a0a0a0"/></svg>
<div style="left:211px;top:581px;width:1px;height:14px;background:#8e8e8e"></div>
<div style="left:240px;top:581px;width:1px;height:14px;background:#8e8e8e"></div>
<svg style="left:218px;top:583px;" width="16" height="10" viewBox="0 0 16 10"><circle cx="2" cy="1.8" r="1.5" fill="#f4f4f4" stroke="#9c9c9c" stroke-width="0.9" opacity="1"/><circle cx="6" cy="3.9" r="1.5" fill="#f4f4f4" stroke="#9c9c9c" stroke-width="0.9" opacity="0.85"/><circle cx="10" cy="6" r="1.5" fill="#f4f4f4" stroke="#9c9c9c" stroke-width="0.9" opacity="0.7"/><circle cx="14" cy="8.1" r="1.5" fill="#f4f4f4" stroke="#9c9c9c" stroke-width="0.9" opacity="0.55"/></svg>
<svg style="left:251px;top:583px;" width="11" height="11" viewBox="0 0 11 11"><rect x="0.6" y="0.8" width="9.4" height="9" fill="#f6f6f6"/><path d="M10 1.6V9.9H1.4" fill="none" stroke="#111" stroke-width="1.5"/><rect x="2.6" y="4.6" width="3.6" height="3.4" fill="#fff" stroke="#333" stroke-width="0.9"/><path d="M6.2 5.6V8H3.6" fill="none" stroke="#111" stroke-width="1"/></svg>
<svg style="left:278px;top:582.5px;" width="11" height="11" viewBox="0 0 11 11"><path d="M2 3.6H9L8.4 10.2H2.6Z" fill="#c4c4c4" stroke="#858585" stroke-width="1"/><path d="M1 3.2H10M4 3V1.3H7V3" stroke="#858585" stroke-width="1.1" fill="none"/><path d="M4.3 5V9M6.7 5V9" stroke="#6a6a6a" stroke-width="0.9"/></svg>
<div style="left:296px;top:581px;width:367px;height:14px;background:#f0f0f0"></div>
<svg style="left:301px;top:584px;" width="6" height="8" viewBox="0 0 6 8"><path d="M5.2 0.7L1.5 4L5.2 7.3" fill="none" stroke="#bdbdbd" stroke-width="2"/></svg>
<svg style="left:652px;top:584px;" width="6" height="8" viewBox="0 0 6 8"><path d="M0.8 0.7L4.5 4L0.8 7.3" fill="none" stroke="#bdbdbd" stroke-width="2"/></svg>
<div style="left:4px;top:598px;width:961px;height:1px;background:#4a4a4a"></div>
<div style="left:680px;top:91px;width:285px;height:507px;background:#666"></div>
<div style="left:680px;top:91px;width:285px;height:12px;background:linear-gradient(#5a5a5a,#363636);border-bottom:1px solid #1a1a1a"></div>
<svg style="left:706px;top:94px;" width="8" height="5.5" viewBox="0 0 8 5.5"><path d="M3.4 0L0 2.75L3.4 5.5ZM7.4 0L4 2.75L7.4 5.5Z" fill="#e0e0e0"/></svg>
<svg style="left:953.8px;top:94px;" width="8" height="5.5" viewBox="0 0 8 5.5"><path d="M0 0L3.4 2.75L0 5.5ZM4 0L7.4 2.75L4 5.5Z" fill="#d0d0d0"/></svg>
<div style="left:680px;top:103px;width:1px;height:495px;background:#4e4e4e"></div>
<div style="left:964px;top:91px;width:1px;height:507px;background:#5a5a5a"></div>
<div style="left:681px;top:103px;width:35px;height:43px;background:#d8d8d8;box-shadow:inset 0 1px 0 #f0f0f0"></div>
<div style="left:681px;top:146px;width:35px;height:1px;background:#4a4a4a"></div>
<div style="left:681px;top:147px;width:35px;height:43px;background:#d8d8d8;box-shadow:inset 0 1px 0 #f0f0f0"></div>
<svg style="left:685px;top:107px;" width="28" height="3" viewBox="0 0 28 3"><rect x="0" y="0" width="1" height="1" fill="#a2a2a2"/><rect x="0" y="2" width="1" height="1" fill="#a2a2a2"/><rect x="2" y="0" width="1" height="1" fill="#a2a2a2"/><rect x="2" y="2" width="1" height="1" fill="#a2a2a2"/><rect x="4" y="0" width="1" height="1" fill="#a2a2a2"/><rect x="4" y="2" width="1" height="1" fill="#a2a2a2"/><rect x="6" y="0" width="1" height="1" fill="#a2a2a2"/><rect x="6" y="2" width="1" height="1" fill="#a2a2a2"/><rect x="8" y="0" width="1" height="1" fill="#a2a2a2"/><rect x="8" y="2" width="1" height="1" fill="#a2a2a2"/><rect x="10" y="0" width="1" height="1" fill="#a2a2a2"/><rect x="10" y="2" width="1" height="1" fill="#a2a2a2"/><rect x="12" y="0" width="1" height="1" fill="#a2a2a2"/><rect x="12" y="2" width="1" height="1" fill="#a2a2a2"/><rect x="14" y="0" width="1" height="1" fill="#a2a2a2"/><rect x="14" y="2" width="1" height="1" fill="#a2a2a2"/><rect x="16" y="0" width="1" height="1" fill="#a2a2a2"/><rect x="16" y="2" width="1" height="1" fill="#a2a2a2"/><rect x="18" y="0" width="1" height="1" fill="#a2a2a2"/><rect x="18" y="2" width="1" height="1" fill="#a2a2a2"/><rect x="20" y="0" width="1" height="1" fill="#a2a2a2"/><rect x="20" y="2" width="1" height="1" fill="#a2a2a2"/><rect x="22" y="0" width="1" height="1" fill="#a2a2a2"/><rect x="22" y="2" width="1" height="1" fill="#a2a2a2"/><rect x="24" y="0" width="1" height="1" fill="#a2a2a2"/><rect x="24" y="2" width="1" height="1" fill="#a2a2a2"/><rect x="26" y="0" width="1" height="1" fill="#a2a2a2"/><rect x="26" y="2" width="1" height="1" fill="#a2a2a2"/></svg>
<svg style="left:685px;top:151px;" width="28" height="3" viewBox="0 0 28 3"><rect x="0" y="0" width="1" height="1" fill="#a2a2a2"/><rect x="0" y="2" width="1" height="1" fill="#a2a2a2"/><rect x="2" y="0" width="1" height="1" fill="#a2a2a2"/><rect x="2" y="2" width="1" height="1" fill="#a2a2a2"/><rect x="4" y="0" width="1" height="1" fill="#a2a2a2"/><rect x="4" y="2" width="1" height="1" fill="#a2a2a2"/><rect x="6" y="0" width="1" height="1" fill="#a2a2a2"/><rect x="6" y="2" width="1" height="1" fill="#a2a2a2"/><rect x="8" y="0" width="1" height="1" fill="#a2a2a2"/><rect x="8" y="2" width="1" height="1" fill="#a2a2a2"/><rect x="10" y="0" width="1" height="1" fill="#a2a2a2"/><rect x="10" y="2" width="1" height="1" fill="#a2a2a2"/><rect x="12" y="0" width="1" height="1" fill="#a2a2a2"/><rect x="12" y="2" width="1" height="1" fill="#a2a2a2"/><rect x="14" y="0" width="1" height="1" fill="#a2a2a2"/><rect x="14" y="2" width="1" height="1" fill="#a2a2a2"/><rect x="16" y="0" width="1" height="1" fill="#a2a2a2"/><rect x="16" y="2" width="1" height="1" fill="#a2a2a2"/><rect x="18" y="0" width="1" height="1" fill="#a2a2a2"/><rect x="18" y="2" width="1" height="1" fill="#a2a2a2"/><rect x="20" y="0" width="1" height="1" fill="#a2a2a2"/><rect x="20" y="2" width="1" height="1" fill="#a2a2a2"/><rect x="22" y="0" width="1" height="1" fill="#a2a2a2"/><rect x="22" y="2" width="1" height="1" fill="#a2a2a2"/><rect x="24" y="0" width="1" height="1" fill="#a2a2a2"/><rect x="24" y="2" width="1" height="1" fill="#a2a2a2"/><rect x="26" y="0" width="1" height="1" fill="#a2a2a2"/><rect x="26" y="2" width="1" height="1" fill="#a2a2a2"/></svg>
<svg style="left:689.5px;top:119.6px;" width="19" height="18" viewBox="0 0 19 18"><defs><linearGradient id="gMbb" x1="0" x2="1" y1="0" y2="1"><stop offset="0" stop-color="#f2f2f2"/><stop offset="1" stop-color="#9c9c9c"/></linearGradient></defs><path d="M1 1V16.6H17.4V2.9H9L7.4 1Z" fill="url(#gMbb)" stroke="#222" stroke-width="1.2" stroke-linejoin="round"/></svg>
<div class="t" style="left:692.2px;top:119.80px;line-height:20px;font-size:9.8px;color:#1e1e1e;letter-spacing:-0.4px;-webkit-text-stroke:0.3px #1e1e1e">Mb</div>
<svg style="left:690px;top:162px;" width="20" height="22" viewBox="0 0 20 22"><rect x="2.4" y="2.7" width="4.4" height="4" fill="#fff" stroke="#8a8a8a" stroke-width="0.9"/><rect x="2.4" y="8.7" width="4.4" height="4" fill="#fff" stroke="#111" stroke-width="1.2"/><rect x="1.9" y="14.1" width="5.4" height="5" fill="#555"/><path d="M11.1 16.9C15.6 15.2 18.2 10 14.9 5.4L12.7 6.6C14.8 10.4 13.8 13.8 11.1 16.9Z" fill="#444"/><path d="M9.4 3.3L16.1 3L13.4 8.2Z" fill="#444"/></svg>
<div style="left:716px;top:103px;width:1px;height:177px;background:#4a4a4a"></div>
<div style="left:717px;top:103px;width:248px;height:17px;background:linear-gradient(#9c9c9c,#838383);border-bottom:1px solid #5a5a5a"></div>
<div style="left:717px;top:103px;width:36px;height:18px;background:linear-gradient(#f0f0f0,#d8d8d8)"></div>
<div class="t" style="left:724px;top:102.04px;line-height:20px;font-size:12px;color:#000;"><span class="cj" style="font-size:11.35px;color:#333">颜色</span></div>
<div style="left:753.5px;top:103px;width:36.5px;height:17px;background:linear-gradient(#9a9a9a,#858585);border-right:1px solid #555;border-bottom:1px solid #555;border-left:1px solid #6c6c6c"></div>
<div class="t" style="left:758.7px;top:102.04px;line-height:20px;font-size:12px;color:#000;"><span class="cj" style="font-size:11.35px;color:#242424">色板</span></div>
<div style="left:790px;top:103px;width:36.5px;height:17px;background:linear-gradient(#9a9a9a,#858585);border-right:1px solid #555;border-bottom:1px solid #555;border-left:1px solid #6c6c6c"></div>
<div class="t" style="left:795.2px;top:102.04px;line-height:20px;font-size:12px;color:#000;"><span class="cj" style="font-size:11.35px;color:#242424">样式</span></div>
<svg style="left:946px;top:108.1px;" width="14" height="8" viewBox="0 0 14 8"><path d="M0 1.5H4.6L2.3 4.5Z" fill="#222"/><path d="M5.5 0.5H14M5.5 2.5H14M5.5 4.5H14M5.5 6.5H14" stroke="#222" stroke-width="1"/></svg>
<div style="left:717px;top:120px;width:248px;height:114px;background:#d6d6d6"></div>
<div style="left:717px;top:234px;width:248px;height:3px;background:#333"></div>
<div style="left:717px;top:237px;width:248px;height:17px;background:linear-gradient(#9c9c9c,#838383);border-bottom:1px solid #5a5a5a"></div>
<div style="left:717px;top:237px;width:36px;height:18px;background:linear-gradient(#f0f0f0,#d8d8d8)"></div>
<div class="t" style="left:724px;top:236.04px;line-height:20px;font-size:12px;color:#000;"><span class="cj" style="font-size:11.35px;color:#333">调整</span></div>
<div style="left:753.5px;top:237px;width:36.5px;height:17px;background:linear-gradient(#9a9a9a,#858585);border-right:1px solid #555;border-bottom:1px solid #555;border-left:1px solid #6c6c6c"></div>
<div class="t" style="left:758.7px;top:236.04px;line-height:20px;font-size:12px;color:#000;"><span class="cj" style="font-size:11.35px;color:#242424">蒙版</span></div>
<svg style="left:946px;top:242.1px;" width="14" height="8" viewBox="0 0 14 8"><path d="M0 1.5H4.6L2.3 4.5Z" fill="#222"/><path d="M5.5 0.5H14M5.5 2.5H14M5.5 4.5H14M5.5 6.5H14" stroke="#222" stroke-width="1"/></svg>
<div style="left:717px;top:254px;width:248px;height:3px;background:#d6d6d6"></div>
<div style="left:717px;top:257px;width:248px;height:3px;background:#333"></div>
<div style="left:717px;top:260px;width:248px;height:17px;background:linear-gradient(#9c9c9c,#838383);border-bottom:1px solid #5a5a5a"></div>
<div style="left:717px;top:260px;width:36px;height:18px;background:linear-gradient(#f0f0f0,#d8d8d8)"></div>
<div class="t" style="left:724px;top:259.04px;line-height:20px;font-size:12px;color:#000;"><span class="cj" style="font-size:11.35px;color:#333">图层</span></div>
<div style="left:753.5px;top:260px;width:36.5px;height:17px;background:linear-gradient(#9a9a9a,#858585);border-right:1px solid #555;border-bottom:1px solid #555;border-left:1px solid #6c6c6c"></div>
<div class="t" style="left:758.7px;top:259.04px;line-height:20px;font-size:12px;color:#000;"><span class="cj" style="font-size:11.35px;color:#242424">通道</span></div>
<div style="left:790px;top:260px;width:36.5px;height:17px;background:linear-gradient(#9a9a9a,#858585);border-right:1px solid #555;border-bottom:1px solid #555;border-left:1px solid #6c6c6c"></div>
<div class="t" style="left:795.2px;top:259.04px;line-height:20px;font-size:12px;color:#000;"><span class="cj" style="font-size:11.35px;color:#242424">路径</span></div>
<svg style="left:946px;top:265.1px;" width="14" height="8" viewBox="0 0 14 8"><path d="M0 1.5H4.6L2.3 4.5Z" fill="#222"/><path d="M5.5 0.5H14M5.5 2.5H14M5.5 4.5H14M5.5 6.5H14" stroke="#222" stroke-width="1"/></svg>
<div style="left:717px;top:277px;width:248px;height:3px;background:#d6d6d6"></div>
<div style="left:737px;top:144px;width:20px;height:20px;background:#fff;border:1px solid #9a9a9a"></div>
<div style="left:725px;top:132px;width:20.3px;height:20.3px;background:#ee7f64;border:1px solid #000"></div>
<div class="t" style="left:761.3px;top:130.49px;line-height:20px;font-size:11px;color:#000;-webkit-text-stroke:0.2px #000">R</div>
<div class="t" style="left:761px;top:156.49px;line-height:20px;font-size:11px;color:#000;-webkit-text-stroke:0.2px #000">G</div>
<div class="t" style="left:761.3px;top:182.49px;line-height:20px;font-size:11px;color:#000;-webkit-text-stroke:0.2px #000">B</div>
<div style="left:775px;top:136.5px;width:97px;height:5.5px;background:linear-gradient(to right,#0a7f64,#f27f66);box-shadow:inset 0 0 0 0.6px rgba(90,90,90,.55)"></div>
<svg style="left:860.5px;top:142px;" width="10" height="8" viewBox="0 0 10 8"><path d="M5 0.9L8.8 5.4V7.2H1.2V5.4Z" fill="#fff" stroke="#3c8c3c" stroke-width="1.1" stroke-linejoin="round"/><path d="M1.2 7.1H8.8" stroke="#2a6a2a" stroke-width="1.3"/></svg>
<div style="left:775px;top:162.5px;width:97px;height:5.5px;background:linear-gradient(to right,#e6146a,#f08a66 50%,#f0f866);box-shadow:inset 0 0 0 0.6px rgba(90,90,90,.55)"></div>
<svg style="left:818.6px;top:168px;" width="10" height="8" viewBox="0 0 10 8"><path d="M5 0.9L8.8 5.4V7.2H1.2V5.4Z" fill="#fff" stroke="#3c8c3c" stroke-width="1.1" stroke-linejoin="round"/><path d="M1.2 7.1H8.8" stroke="#2a6a2a" stroke-width="1.3"/></svg>
<div style="left:775px;top:188.5px;width:97px;height:5.5px;background:linear-gradient(to right,#ee801a,#ec80f4);box-shadow:inset 0 0 0 0.6px rgba(90,90,90,.55)"></div>
<svg style="left:808.5px;top:194px;" width="10" height="8" viewBox="0 0 10 8"><path d="M5 0.9L8.8 5.4V7.2H1.2V5.4Z" fill="#fff" stroke="#3c8c3c" stroke-width="1.1" stroke-linejoin="round"/><path d="M1.2 7.1H8.8" stroke="#2a6a2a" stroke-width="1.3"/></svg>
<div style="left:877px;top:128.5px;width:36px;height:21.5px;background:#fff;border:1px solid #8c8c8c"></div>
<div class="t" style="left:881px;top:128.69px;line-height:20px;font-size:11px;color:#000;letter-spacing:-0.3px;-webkit-text-stroke:0.2px #000">238</div>
<div style="left:877px;top:154.5px;width:36px;height:21.5px;background:#fff;border:1px solid #8c8c8c"></div>
<div class="t" style="left:881px;top:154.69px;line-height:20px;font-size:11px;color:#000;letter-spacing:-0.3px;-webkit-text-stroke:0.2px #000">127</div>
<div style="left:877px;top:180.5px;width:36px;height:21.5px;background:#fff;border:1px solid #8c8c8c"></div>
<div class="t" style="left:881px;top:180.69px;line-height:20px;font-size:11px;color:#000;letter-spacing:-0.3px;-webkit-text-stroke:0.2px #000">100</div>
<div style="left:724.5px;top:212px;width:199px;height:15px;background:linear-gradient(to bottom,rgba(255,255,255,1) 0%,rgba(255,255,255,.75) 18%,rgba(255,255,255,0) 52%,rgba(0,0,0,0) 56%,rgba(0,0,0,.8) 88%,rgba(0,0,0,1) 100%),linear-gradient(to right,#e8201c 0%,#f08a1c 8%,#fff01a 17%,#8cc63e 25%,#0a9a48 33%,#0aa0a0 42%,#1ea0dc 50%,#1a5cb0 58%,#2a2a8c 67%,#7a2a8c 75%,#d6168a 83%,#e0185a 92%,#e8201c 100%)"></div>
<div style="left:915px;top:212px;width:8.5px;height:7.5px;background:#fff"></div>
<div style="left:915px;top:219.5px;width:8.5px;height:7.5px;background:#000"></div>
</div></body></html>
